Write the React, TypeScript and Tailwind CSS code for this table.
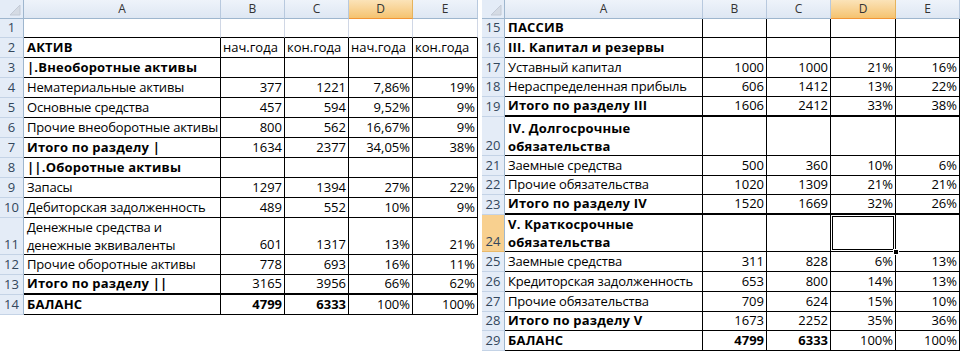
import React from 'react';

type Row = {
  n: number;
  h: number;
  a: string;
  v?: string[];
  bold?: boolean;
  boldNums?: boolean;
  thick?: boolean;
  blank?: boolean;
  textRow?: boolean;
};

const HEIGHTS: Record<number, string> = {
  19: 'h-[19px]',
  20: 'h-[20px]',
  37: 'h-[37px]',
  39: 'h-[39px]',
};

const leftRows: Row[] = [
  { n: 1, h: 19, a: '', blank: true },
  { n: 2, h: 20, a: 'АКТИВ', bold: true, v: ['нач.года', 'кон.года', 'нач.года', 'кон.года'], textRow: true },
  { n: 3, h: 20, a: '|.Внеоборотные активы', bold: true },
  { n: 4, h: 20, a: 'Нематериальные активы', v: ['377', '1221', '7,86%', '19%'] },
  { n: 5, h: 20, a: 'Основные средства', v: ['457', '594', '9,52%', '9%'] },
  { n: 6, h: 20, a: 'Прочие внеоборотные активы', v: ['800', '562', '16,67%', '9%'] },
  { n: 7, h: 20, a: 'Итого по разделу |', bold: true, v: ['1634', '2377', '34,05%', '38%'] },
  { n: 8, h: 20, a: '||.Оборотные активы', bold: true },
  { n: 9, h: 20, a: 'Запасы', v: ['1297', '1394', '27%', '22%'] },
  { n: 10, h: 20, a: 'Дебиторская задолженность', v: ['489', '552', '10%', '9%'] },
  { n: 11, h: 37, a: 'Денежные средства и\nденежные эквиваленты', v: ['601', '1317', '13%', '21%'] },
  { n: 12, h: 20, a: 'Прочие оборотные активы', v: ['778', '693', '16%', '11%'] },
  { n: 13, h: 20, a: 'Итого по разделу ||', bold: true, thick: true, v: ['3165', '3956', '66%', '62%'] },
  { n: 14, h: 20, a: 'БАЛАНС', bold: true, boldNums: true, v: ['4799', '6333', '100%', '100%'] },
];

const rightRows: Row[] = [
  { n: 15, h: 19, a: 'ПАССИВ', bold: true },
  { n: 16, h: 20, a: 'III. Капитал и резервы', bold: true },
  { n: 17, h: 20, a: 'Уставный капитал', v: ['1000', '1000', '21%', '16%'] },
  { n: 18, h: 20, a: 'Нераспределенная прибыль', v: ['606', '1412', '13%', '22%'] },
  { n: 19, h: 20, a: 'Итого по разделу III', bold: true, thick: true, v: ['1606', '2412', '33%', '38%'] },
  { n: 20, h: 39, a: 'IV. Долгосрочные\nобязательства', bold: true },
  { n: 21, h: 20, a: 'Заемные средства', v: ['500', '360', '10%', '6%'] },
  { n: 22, h: 20, a: 'Прочие обязательства', v: ['1020', '1309', '21%', '21%'] },
  { n: 23, h: 20, a: 'Итого по разделу IV', bold: true, thick: true, v: ['1520', '1669', '32%', '26%'] },
  { n: 24, h: 37, a: 'V. Краткосрочные\nобязательства', bold: true },
  { n: 25, h: 20, a: 'Заемные средства', v: ['311', '828', '6%', '13%'] },
  { n: 26, h: 20, a: 'Кредиторская задолженность', v: ['653', '800', '14%', '13%'] },
  { n: 27, h: 20, a: 'Прочие обязательства', v: ['709', '624', '15%', '10%'] },
  { n: 28, h: 20, a: 'Итого по разделу V', bold: true, v: ['1673', '2252', '35%', '36%'] },
  { n: 29, h: 20, a: 'БАЛАНС', bold: true, boldNums: true, v: ['4799', '6333', '100%', '100%'] },
];

const Corner = ({ w }: { w: string }) => (
  <div className={`${w} shrink-0 h-[19px] relative bg-[#e4ecf7] border-r border-b border-[#9eb6ce]`}>
    <svg width="12" height="12" viewBox="0 0 12 12" className="absolute right-[2px] bottom-[2px]">
      <polygon points="11,1 11,11 1,11" fill="#d5dbe4" stroke="#c3cad6" strokeWidth="1" />
    </svg>
  </div>
);

const ColHead = ({ w, label, sel }: { w: string; label: string; sel?: boolean }) => (
  <div
    className={`${w} shrink-0 h-[19px] flex items-center justify-center text-[12px] border-r border-b ${
      sel
        ? 'bg-linear-to-b from-[#fbe3b8] to-[#f5c36f] border-r-[#e6b35c] border-b-[#f29536] text-[#333]'
        : 'bg-linear-to-b from-[#eef3fa] to-[#dee7f3] border-r-[#b8c9de] border-b-[#9eb6ce] text-[#333]'
    }`}
  >
    {label}
  </div>
);

interface SheetProps {
  widths: string[];
  rows: Row[];
  selRow?: number;
}

const Sheet: React.FC<SheetProps> = ({ widths, rows, selRow }) => {
  const [wn, wa, ...wv] = widths;
  return (
    <div className="flex flex-col">
      <div className="flex">
        <Corner w={wn} />
        <ColHead w={wa} label="A" />
        <ColHead w={wv[0]} label="B" />
        <ColHead w={wv[1]} label="C" />
        <ColHead w={wv[2]} label="D" sel />
        <ColHead w={wv[3]} label="E" />
      </div>
      {rows.map((r) => {
        const bb = r.thick ? 'border-b-2' : 'border-b';
        const rc = r.blank ? 'border-r-[#d0d7e5]' : 'border-r-black';
        const isSel = selRow === r.n;
        const multi = r.a.includes('\n');
        return (
          <div key={r.n} className={`flex ${HEIGHTS[r.h]}`}>
            <div
              className={`${wn} shrink-0 flex items-end justify-center pb-[1px] leading-[17px] text-[13px] text-[#33475c] border-r border-b border-r-[#9eb6ce] ${
                isSel ? 'bg-[#f8d08f] border-b-[#e9b96a]' : 'bg-[#e4ecf7] border-b-[#c4d3e6]'
              }`}
            >
              {r.n}
            </div>
            <div
              className={`${wa} shrink-0 flex items-end overflow-x-clip pl-[3px] border-r ${bb} ${rc} border-b-black whitespace-pre ${
                multi ? 'leading-[18px] pb-0' : 'leading-[17px] pb-[1px]'
              } ${r.bold ? 'font-bold tracking-[0.2px]' : 'tracking-[-0.15px]'}`}
            >
              {r.a}
            </div>
            {wv.map((w, i) => {
              const val = r.v ? r.v[i] : '';
              const selCell = isSel && i === 2;
              return (
                <div
                  key={i}
                  className={`${w} shrink-0 relative flex items-end pb-[1px] leading-[17px] whitespace-nowrap border-r ${bb} ${rc} border-b-black ${
                    r.textRow ? 'justify-start pl-[2px]' : 'justify-end pr-[2px]'
                  } ${r.boldNums && i < 2 ? 'font-bold' : ''}`}
                >
                  {val}
                  {selCell && (
                    <>
                      <div className="absolute inset-[1px] border border-black" />
                      <div className="absolute -right-[4px] -bottom-[4px] w-[6px] h-[6px] bg-black border border-white z-10" />
                    </>
                  )}
                </div>
              );
            })}
          </div>
        );
      })}
    </div>
  );
};

export default function App() {
  return (
    <div className="w-[960px] h-[351px] overflow-hidden bg-white flex gap-[4px] text-[13px] text-black font-['Open_Sans',sans-serif]">
      <Sheet
        widths={['w-[24px]', 'w-[197px]', 'w-[64px]', 'w-[64px]', 'w-[64px]', 'w-[65px]']}
        rows={leftRows}
      />
      <Sheet
        widths={['w-[23px]', 'w-[198px]', 'w-[64px]', 'w-[64px]', 'w-[65px]', 'w-[64px]']}
        rows={rightRows}
        selRow={24}
      />
    </div>
  );
}
